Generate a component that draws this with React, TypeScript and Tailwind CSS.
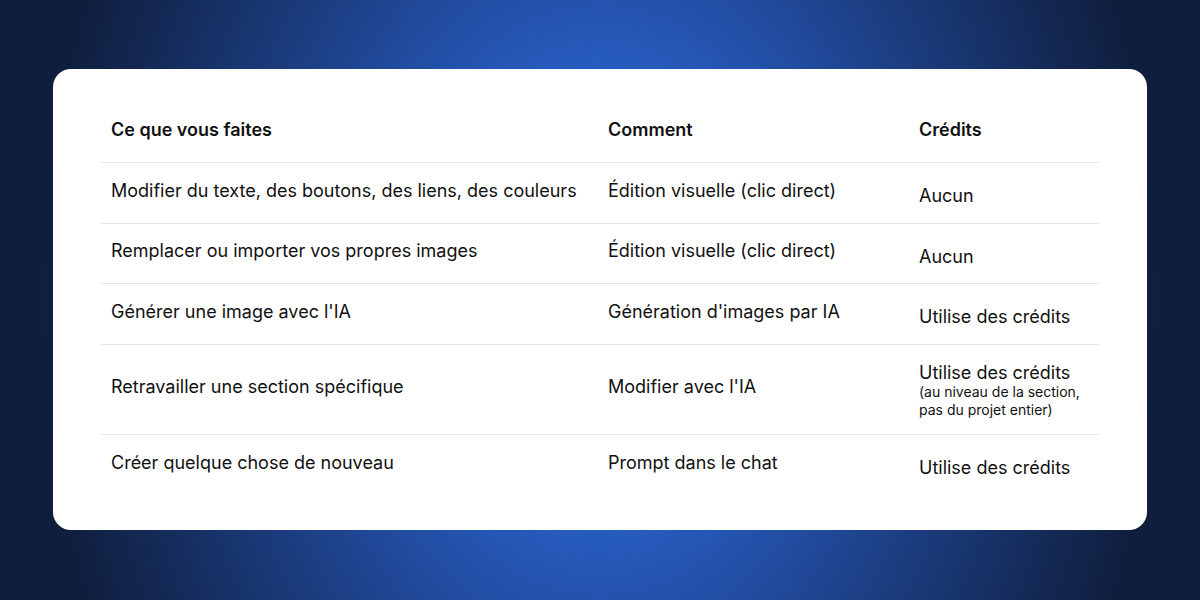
import React from "react";

type Row = { what: string; how: string; credit: string; sub?: string[]; h: number; last?: boolean };

const rows: Row[] = [
  { what: "Modifier du texte, des boutons, des liens, des couleurs", how: "Édition visuelle (clic direct)", credit: "Aucun", h: 61 },
  { what: "Remplacer ou importer vos propres images", how: "Édition visuelle (clic direct)", credit: "Aucun", h: 60 },
  { what: "Générer une image avec l'IA", how: "Génération d'images par IA", credit: "Utilise des crédits", h: 61 },
  {
    what: "Retravailler une section spécifique",
    how: "Modifier avec l'IA",
    credit: "Utilise des crédits",
    sub: ["(au niveau de la section,", "pas du projet entier)"],
    h: 90,
  },
  { what: "Créer quelque chose de nouveau", how: "Prompt dans le chat", credit: "Utilise des crédits", h: 60, last: true },
];

export default function App() {
  return (
    <div
      className="w-[1200px] h-[600px] flex items-start justify-center pt-[69px] bg-[radial-gradient(ellipse_560px_760px_at_50%_50%,#2b69d8_0%,#275cc0_30%,#1c3e82_62%,#0f1e3d_100%)]"
      style={{ fontFamily: "Inter, 'Noto Sans', sans-serif" }}
    >
      <div className="w-[1094px] h-[461px] bg-white rounded-[18px] px-[48px] pt-[38px] text-[#111111]">
        <div className="grid grid-cols-[497px_311px_190px] border-b border-[#e5e5e5] h-[56px] content-start">
          <div className="px-[10px] pt-[11px] text-[18px] leading-6 font-semibold">Ce que vous faites</div>
          <div className="px-[10px] pt-[11px] text-[18px] leading-6 font-semibold">Comment</div>
          <div className="px-[10px] pt-[11px] text-[18px] leading-6 font-semibold">Crédits</div>
        </div>
        {rows.map((r, i) => (
          <div
            key={i}
            className={
              "grid grid-cols-[497px_311px_190px] items-center " +
              (r.last ? "" : "border-b border-[#e5e5e5]")
            }
            style={{ height: r.h }}
          >
            <div className="px-[10px] pb-[5px] text-[18px] leading-6">{r.what}</div>
            <div className="px-[10px] pb-[5px] text-[18px] leading-6">{r.how}</div>
            <div className={"self-start px-[10px] " + (r.sub ? "pt-[16px]" : "pt-[21px]")}>
              <div className="text-[18px] leading-6">{r.credit}</div>
              {r.sub && (
                <div className="-mt-[2px] text-[14px] leading-[18px]">
                  {r.sub.map((s, j) => (
                    <div key={j}>{s}</div>
                  ))}
                </div>
              )}
            </div>
          </div>
        ))}
      </div>
    </div>
  );
}
